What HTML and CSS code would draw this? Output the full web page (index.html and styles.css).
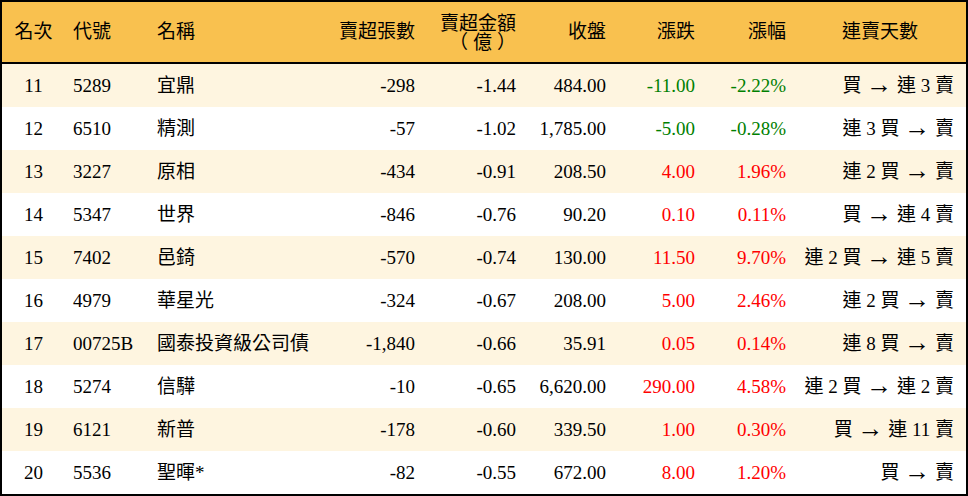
FILE: index.html
```html
<!DOCTYPE html>
<html lang="zh-Hant">
<head>
<meta charset="utf-8">
<title>賣超排行</title>
<link rel="stylesheet" href="styles.css">
</head>
<body>
<div class="board">
  <div class="row head">
    <div class="c center">名次</div>
    <div class="c left">代號</div>
    <div class="c left">名稱</div>
    <div class="c right">賣超張數</div>
    <div class="c right two">賣超金額<br><span class="paren">（億）</span></div>
    <div class="c right">收盤</div>
    <div class="c right">漲跌</div>
    <div class="c right">漲幅</div>
    <div class="c center last">連賣天數</div>
  </div>
  <div class="row alt">
    <div class="c center">11</div><div class="c left">5289</div><div class="c left">宜鼎</div>
    <div class="c right">-298</div><div class="c right">-1.44</div><div class="c right">484.00</div>
    <div class="c right down">-11.00</div><div class="c right down">-2.22%</div><div class="c right streak">買 <span class="arr">→</span> 連 3 賣</div>
  </div>
  <div class="row">
    <div class="c center">12</div><div class="c left">6510</div><div class="c left">精測</div>
    <div class="c right">-57</div><div class="c right">-1.02</div><div class="c right">1,785.00</div>
    <div class="c right down">-5.00</div><div class="c right down">-0.28%</div><div class="c right streak">連 3 買 <span class="arr">→</span> 賣</div>
  </div>
  <div class="row alt">
    <div class="c center">13</div><div class="c left">3227</div><div class="c left">原相</div>
    <div class="c right">-434</div><div class="c right">-0.91</div><div class="c right">208.50</div>
    <div class="c right up">4.00</div><div class="c right up">1.96%</div><div class="c right streak">連 2 買 <span class="arr">→</span> 賣</div>
  </div>
  <div class="row">
    <div class="c center">14</div><div class="c left">5347</div><div class="c left">世界</div>
    <div class="c right">-846</div><div class="c right">-0.76</div><div class="c right">90.20</div>
    <div class="c right up">0.10</div><div class="c right up">0.11%</div><div class="c right streak">買 <span class="arr">→</span> 連 4 賣</div>
  </div>
  <div class="row alt">
    <div class="c center">15</div><div class="c left">7402</div><div class="c left">邑錡</div>
    <div class="c right">-570</div><div class="c right">-0.74</div><div class="c right">130.00</div>
    <div class="c right up">11.50</div><div class="c right up">9.70%</div><div class="c right streak">連 2 買 <span class="arr">→</span> 連 5 賣</div>
  </div>
  <div class="row">
    <div class="c center">16</div><div class="c left">4979</div><div class="c left">華星光</div>
    <div class="c right">-324</div><div class="c right">-0.67</div><div class="c right">208.00</div>
    <div class="c right up">5.00</div><div class="c right up">2.46%</div><div class="c right streak">連 2 買 <span class="arr">→</span> 賣</div>
  </div>
  <div class="row alt">
    <div class="c center">17</div><div class="c left">00725B</div><div class="c left">國泰投資級公司債</div>
    <div class="c right">-1,840</div><div class="c right">-0.66</div><div class="c right">35.91</div>
    <div class="c right up">0.05</div><div class="c right up">0.14%</div><div class="c right streak">連 8 買 <span class="arr">→</span> 賣</div>
  </div>
  <div class="row">
    <div class="c center">18</div><div class="c left">5274</div><div class="c left">信驊</div>
    <div class="c right">-10</div><div class="c right">-0.65</div><div class="c right">6,620.00</div>
    <div class="c right up">290.00</div><div class="c right up">4.58%</div><div class="c right streak">連 2 買 <span class="arr">→</span> 連 2 賣</div>
  </div>
  <div class="row alt">
    <div class="c center">19</div><div class="c left">6121</div><div class="c left">新普</div>
    <div class="c right">-178</div><div class="c right">-0.60</div><div class="c right">339.50</div>
    <div class="c right up">1.00</div><div class="c right up">0.30%</div><div class="c right streak">買 <span class="arr">→</span> 連 11 賣</div>
  </div>
  <div class="row">
    <div class="c center">20</div><div class="c left">5536</div><div class="c left">聖暉*</div>
    <div class="c right">-82</div><div class="c right">-0.55</div><div class="c right">672.00</div>
    <div class="c right up">8.00</div><div class="c right up">1.20%</div><div class="c right streak">買 <span class="arr">→</span> 賣</div>
  </div>
</div>
</body>
</html>
```
FILE: styles.css
```css
html, body {
  margin: 0;
  padding: 0;
  background: #ffffff;
}
.board {
  width: 968px;
  height: 496px;
  box-sizing: border-box;
  border: 2px solid #000;
  font-family: "Liberation Serif", "Noto Sans CJK TC", serif;
  font-size: 19px;
  color: #000;
  background: #fff;
}
.row {
  display: grid;
  grid-template-columns: 63px 84px 180px 94px 101px 90px 89px 91px 172px;
  height: 43px;
  align-items: center;
}
.row.alt {
  background: #fef5e0;
}
.row.head {
  height: 60px;
  background: #f9c14f;
  border-bottom: 2px solid #000;
}
.c {
  padding: 0 8px;
  white-space: nowrap;
  line-height: 20px;
}
.center { text-align: center; }
.left { text-align: left; }
.right { text-align: right; }
.c.last { padding-left: 0; padding-right: 0; }
.c.streak { padding-right: 12px; }
.two { line-height: 19px; padding-top: 2px; }
.paren {
  display: inline-block;
  letter-spacing: 5px;
  margin-right: -5px;
}
.arr {
  font-size: 26px;
  line-height: 0;
  position: relative;
  top: 1px;
}
.down { color: #008000; }
.up { color: #ff0000; }
```
